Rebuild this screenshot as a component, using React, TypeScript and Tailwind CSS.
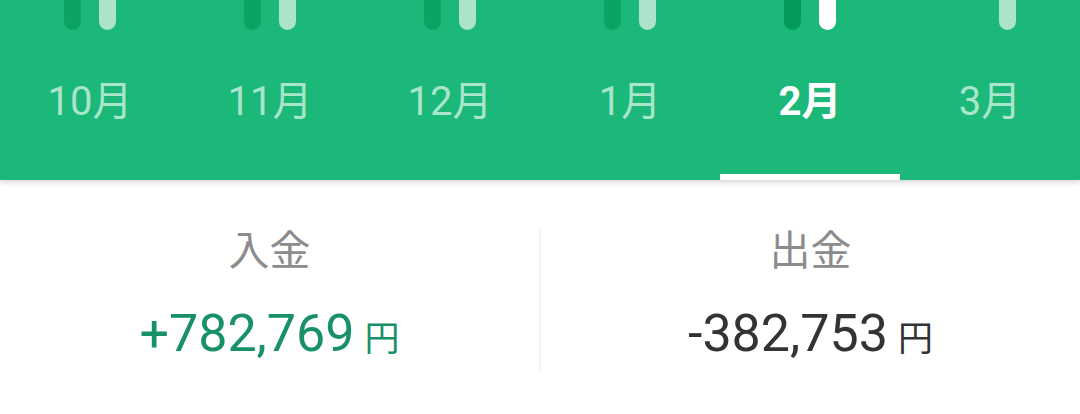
import React from 'react'

const months = [
  { label: '10月', dark: true },
  { label: '11月', dark: true },
  { label: '12月', dark: true },
  { label: '1月', dark: true },
  { label: '2月', dark: true, active: true },
  { label: '3月', dark: false },
]

const font = { fontFamily: 'Roboto, "Noto Sans CJK JP", sans-serif' }

export default function App() {
  return (
    <div className="w-[1080px] h-[414px] overflow-hidden bg-white" style={font}>
      <header className="relative z-10 h-[180px] bg-[#1cb879] shadow-[0_2px_6px_rgba(0,0,0,0.18)] flex">
        {months.map((m) => (
          <div key={m.label} className="flex-1 flex flex-col items-center">
            <div className="h-[30px] flex gap-[18px]">
              <div
                className={
                  'w-[17px] h-[30px] rounded-b-[9px] ' +
                  (m.dark ? (m.active ? 'bg-[#049a59]' : 'bg-[#0ca464]') : 'bg-transparent')
                }
              />
              <div
                className={
                  'w-[17px] h-[30px] rounded-b-[9px] ' + (m.active ? 'bg-white' : 'bg-[#ace3cb]')
                }
              />
            </div>
            <div
              className={
                'h-[144px] w-full flex items-center justify-center text-[40px] leading-none ' +
                (m.active ? 'text-white font-bold' : 'text-[#a9e5ca]')
              }
            >
              {m.label}
            </div>
            <div className={'h-[6px] w-full ' + (m.active ? 'bg-white' : '')} />
          </div>
        ))}
      </header>

      <section className="flex">
        <div className="flex-1 flex flex-col items-center pt-[50px]">
          <div className="text-[41px] leading-[42px] text-[#8c8c8c]">入金</div>
          <div className="mt-[36px] flex items-baseline text-[#189068]">
            <span className="text-[52px] leading-[52px]">+782,769</span>
            <span className="ml-[10px] text-[35px] leading-none">円</span>
          </div>
        </div>
        <div className="w-[2px] mt-[50px] h-[140px] bg-[#f2f2f2]" />
        <div className="flex-1 flex flex-col items-center pt-[50px]">
          <div className="text-[41px] leading-[42px] text-[#8c8c8c]">出金</div>
          <div className="mt-[36px] flex items-baseline text-[#333333]">
            <span className="text-[52px] leading-[52px]">-382,753</span>
            <span className="ml-[10px] text-[35px] leading-none">円</span>
          </div>
        </div>
      </section>
    </div>
  )
}
